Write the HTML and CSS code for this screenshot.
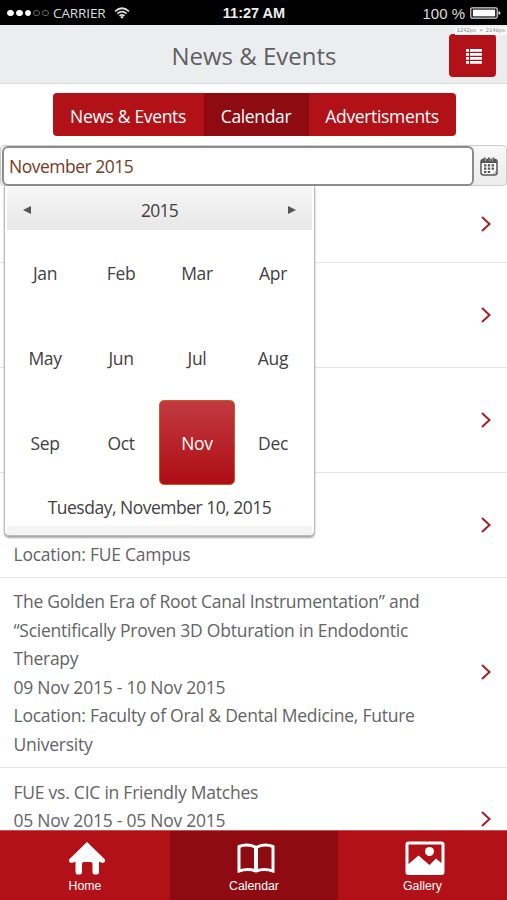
FILE: index.html
```html
<!DOCTYPE html>
<html lang="en">
<head>
    <meta charset="UTF-8">
    <meta name="viewport" content="width=device-width, initial-scale=1.0">
    <title>News &amp; Events</title>
    <link rel="stylesheet" href="styles.css">
</head>
<body>
    <div class="app">
        <!-- Status bar -->
        <div class="status-bar">
            <div class="carrier">
                <div class="dots">
                    <i class="on"></i><i class="on"></i><i class="on"></i><i></i><i></i>
                </div>
                <span class="carrier-name">CARRIER</span>
                <svg class="wifi" width="16" height="12" viewBox="0 0 16 12" fill="none" stroke="#ddd" stroke-width="1.7">
                    <path d="M1 4.3Q8 -1.8 15 4.3M3.3 6.7Q8 2.6 12.7 6.7M5.5 9Q8 6.9 10.5 9"/>
                    <circle cx="8" cy="10.3" r="1.2" fill="#ddd" stroke="none"/>
                </svg>
            </div>
            <span class="time">11:27 AM</span>
            <div class="power">
                <span class="percent">100 %</span>
                <svg width="31" height="12" viewBox="0 0 31 12">
                    <rect x="0.8" y="0.8" width="26.4" height="10.4" rx="1.5" fill="none" stroke="#ddd" stroke-width="1.2"/>
                    <rect x="2.8" y="2.6" width="22.4" height="6.8" fill="#fff"/>
                    <path d="M28.5 4Q30.5 4.3 30.5 6T28.5 8Z" fill="#ddd"/>
                </svg>
            </div>
        </div>

        <!-- Header -->
        <div class="header">
            <h1>News &amp; Events</h1>
            <button class="menu-button">
                <svg width="16" height="15" viewBox="0 0 16 15" fill="#fff">
                    <path d="M0 0h3v2.8H0zM4 0h12v2.8H4zM0 4h3v2.8H0zM4 4h12v2.8H4zM0 8h3v2.8H0zM4 8h12v2.8H4zM0 12h3v2.8H0zM4 12h12v2.8H4z"/>
                </svg>
            </button>
            <span class="size-tag">1242px × 2148px</span>
        </div>

        <!-- Tabs -->
        <div class="tabs">
            <button>News &amp; Events</button>
            <button class="active">Calendar</button>
            <button>Advertisments</button>
        </div>

        <!-- Month picker -->
        <div class="picker">
            <div class="field">
                <div class="month-input">November 2015</div>
                <div class="picker-icon">
                    <svg width="18" height="19" viewBox="0 0 18 19">
                        <rect x="1" y="2.5" width="16" height="15.5" rx="2.5" fill="#fff" stroke="#555" stroke-width="1.5"/>
                        <path d="M1 6V4.5Q1 2.3 3 2.3H15Q17 2.3 17 4.5V6Z" fill="#555"/>
                        <path d="M4.5 0.5V4M9 0.5V4M13.5 0.5V4" stroke="#555" stroke-width="1.8"/>
                        <path d="M5.4 2V4.3M9.9 2V4.3M12.6 2V4.3" stroke="#eee" stroke-width="0.6"/>
                        <path d="M4 7.3h2.4v2.2H4zM7.8 7.3h2.4v2.2H7.8zM11.6 7.3H14v2.2h-2.4zM4 10.6h2.4v2.2H4zM7.8 10.6h2.4v2.2H7.8zM11.6 10.6H14v2.2h-2.4zM4 13.9h2.4v2.2H4zM7.8 13.9h2.4v2.2H7.8z" fill="#555"/>
                        <path d="M12.5 18L17 13.5" stroke="#777" stroke-width="1"/>
                    </svg>
                </div>
            </div>
            <div class="popup">
                <div class="popup-header">
                    <span class="arrow-left"></span>
                    <span class="year">2015</span>
                    <span class="arrow-right"></span>
                </div>
                <div class="months">
                    <span>Jan</span>
                    <span>Feb</span>
                    <span>Mar</span>
                    <span>Apr</span>
                    <span>May</span>
                    <span>Jun</span>
                    <span>Jul</span>
                    <span>Aug</span>
                    <span>Sep</span>
                    <span>Oct</span>
                    <span class="selected">Nov</span>
                    <span>Dec</span>
                </div>
                <div class="today">Tuesday, November 10, 2015</div>
            </div>
        </div>

        <!-- Events -->
        <div class="events">
            <div class="event first">
                <div class="info"></div>
                <svg class="chevron" width="10" height="16" viewBox="0 0 10 16"><path d="M1 1L8.5 8L1 15"/></svg>
            </div>
            <div class="event">
                <div class="info"></div>
                <svg class="chevron" width="10" height="16" viewBox="0 0 10 16"><path d="M1 1L8.5 8L1 15"/></svg>
            </div>
            <div class="event">
                <div class="info"></div>
                <svg class="chevron" width="10" height="16" viewBox="0 0 10 16"><path d="M1 1L8.5 8L1 15"/></svg>
            </div>
            <div class="event">
                <div class="info"><p>Location: FUE Campus</p></div>
                <svg class="chevron" width="10" height="16" viewBox="0 0 10 16"><path d="M1 1L8.5 8L1 15"/></svg>
            </div>
            <div class="event tall">
                <div class="info">
                    <p>The Golden Era of Root Canal Instrumentation” and<br>“Scientifically Proven 3D Obturation in Endodontic<br>Therapy</p>
                    <p>09 Nov 2015 - 10 Nov 2015</p>
                    <p>Location: Faculty of Oral &amp; Dental Medicine, Future<br>University</p>
                </div>
                <svg class="chevron" width="10" height="16" viewBox="0 0 10 16"><path d="M1 1L8.5 8L1 15"/></svg>
            </div>
            <div class="event last">
                <div class="info">
                    <p>FUE vs. CIC in Friendly Matches</p>
                    <p>05 Nov 2015 - 05 Nov 2015</p>
                </div>
                <svg class="chevron" width="10" height="16" viewBox="0 0 10 16"><path d="M1 1L8.5 8L1 15"/></svg>
            </div>
        </div>

        <!-- Bottom navigation -->
        <div class="bottom-nav">
            <div class="nav-item">
                <svg width="38" height="34" viewBox="0 0 38 34">
                    <path d="M19 1L36.5 18Q38 20 36 21.5Q34 22.5 31 20.5V31Q31 33.5 28.5 33.5H26.5Q24.5 33.5 24.5 31.5V23Q24.5 21 22.5 21H16Q14 21 14 23V31.5Q14 33.5 12 33.5H9.5Q7.5 33.5 7.5 31V20.5Q4.5 22.5 2 21.5Q0 20 1.5 18Z" fill="#fff"/>
                </svg>
                <span>Home</span>
            </div>
            <div class="nav-item active">
                <svg width="40" height="34" viewBox="0 0 40 34" fill="none" stroke="#fff" stroke-width="3">
                    <path d="M20 6.5Q12 2 3 5.5V30Q12 27 20 30Q28 27 37 30V5.5Q28 2 20 6.5Z"/>
                    <path d="M20 6.5V30" stroke-width="4"/>
                </svg>
                <span>Calendar</span>
            </div>
            <div class="nav-item">
                <svg width="40" height="34" viewBox="0 0 40 34">
                    <rect x="2" y="2" width="36" height="30.5" rx="1.5" fill="none" stroke="#fff" stroke-width="3"/>
                    <path d="M3 23.5L13.5 14.5L24.5 24L31 17.5L37 22.5V32H3Z" fill="#fff"/>
                    <circle cx="24.5" cy="10.5" r="4.5" fill="#fff"/>
                </svg>
                <span>Gallery</span>
            </div>
        </div>
    </div>
</body>
</html>
```
FILE: styles.css
```css
* {
    box-sizing: border-box;
}
body {
    font-family: "Open Sans", "Noto Sans", sans-serif;
    font-size: 17px;
    margin: 0;
    background-color: #fff;
    color: #626466;
}
p, h1 {
    margin: 0;
}
button {
    border: none;
    padding: 0;
    font: inherit;
    color: white;
    cursor: pointer;
}
.app {
    height: 900px;
    display: flex;
    flex-direction: column;
}

/* Status bar */
.status-bar {
    flex: none;
    height: 25px;
    display: grid;
    grid-template-columns: 1fr auto 1fr;
    align-items: center;
    padding: 1px 6px 0 7px;
    background: #000;
    color: #ddd;
    font-size: 13px;
}
.carrier, .dots, .power {
    display: flex;
    align-items: center;
}
.dots {
    gap: 2px;
    margin-right: 4px;
}
.dots i {
    width: 6.8px;
    height: 6.8px;
    border: 1px solid #666;
    border-radius: 50%;
}
.dots .on {
    background: #fff;
    border-color: #fff;
}
.carrier-name {
    font-size: 13.5px;
    letter-spacing: -0.1px;
}
.wifi {
    margin-left: 8px;
}
.time {
    font-family: "Liberation Sans", Arial, sans-serif;
    font-weight: bold;
    font-size: 14.5px;
    color: #eee;
}
.power {
    justify-content: flex-end;
    gap: 5px;
    font-family: "Liberation Sans", Arial, sans-serif;
    font-size: 15px;
}

/* Header */
.header {
    flex: none;
    position: relative;
    height: 59px;
    display: flex;
    align-items: center;
    justify-content: center;
    background: #ebedef;
    border-bottom: 1px solid #d9dbdd;
}
.header h1 {
    font-size: 24px;
    font-weight: normal;
    color: #5c6062;
    padding: 2px 0 0 1px;
}
.menu-button {
    position: absolute;
    right: 11px;
    top: 9px;
    width: 47px;
    height: 43px;
    display: flex;
    align-items: center;
    justify-content: center;
    padding: 2px 0 0 2px;
    border-radius: 4px;
    background: #b21117;
}
.size-tag {
    position: absolute;
    right: 0;
    top: 2px;
    width: 52px;
    height: 8px;
    background: #f8f8f8;
    color: #888;
    font: 5.4px/8px "Liberation Mono", monospace;
    text-align: center;
    white-space: nowrap;
}

/* Tabs */
.tabs {
    flex: none;
    display: grid;
    grid-template-columns: 151px 105px 147px;
    width: 403px;
    height: 43px;
    margin: 9px auto 0 53px;
    border-radius: 4px;
    overflow: hidden;
}
.tabs button {
    background: #b21117;
    padding: 3px 1px 0 0;
    font-size: 17.5px;
    letter-spacing: -0.35px;
}
.tabs .active {
    background: #8e0b12;
}

/* Month picker */
.picker {
    flex: none;
    position: relative;
    margin-top: 9px;
    height: 42px;
}
.field {
    display: flex;
    height: 41px;
    border: 1px solid #ccc;
    border-radius: 4px;
    background: linear-gradient(#f8f8f8, #ececec);
}
.month-input {
    width: 472px;
    height: 40px;
    margin-left: 1px;
    padding: 0 0 0 5px;
    border: 2px solid #8c8c8c;
    border-radius: 6px;
    background: #fff;
    color: #753b1e;
    font-size: 17.5px;
    letter-spacing: -0.5px;
    line-height: 37px;
}
.picker-icon {
    flex: 1;
    display: flex;
    align-items: center;
    justify-content: center;
    padding: 2px 2px 0 0;
}
.popup {
    position: absolute;
    left: 4px;
    top: 41px;
    width: 311px;
    height: 350px;
    padding: 0 2px;
    background: #fff;
    border: 1px solid #bbb;
    border-top: none;
    border-radius: 0 0 5px 5px;
    box-shadow: 0 2px 2px rgba(0, 0, 0, 0.35);
    color: #414141;
    font-size: 17.5px;
    letter-spacing: -0.35px;
}
.popup-header {
    display: flex;
    align-items: center;
    justify-content: space-between;
    height: 44px;
    padding: 3px 16px 0;
    background: linear-gradient(#f7f7f7, #e8e7e8);
}
.year {
    letter-spacing: -0.8px;
}
.arrow-left, .arrow-right {
    border: 4px solid transparent;
}
.arrow-left {
    border-right: 8px solid #555;
    border-left: none;
}
.arrow-right {
    border-left: 8px solid #555;
    border-right: none;
}
.months {
    display: grid;
    grid-template-columns: repeat(4, 76px);
    grid-template-rows: repeat(3, 85px);
}
.months span {
    display: flex;
    align-items: center;
    justify-content: center;
}
.months .selected {
    color: white;
    border: 1px solid #c95a22;
    border-radius: 5px;
    background: linear-gradient(#c13a40, #ae0e14);
}
.today {
    height: 50px;
    padding-top: 9px;
    text-align: center;
    letter-spacing: -0.5px;
    line-height: 26px;
    background: linear-gradient(#fff 39px, #f4f4f4 42px);
}

/* Events */
.events {
    flex: 1;
    min-height: 0;
}
.event {
    display: flex;
    align-items: center;
    justify-content: space-between;
    height: 105px;
    padding: 0 16px 9px 13.5px;
    border-bottom: 1px solid #e4e4e4;
    font-size: 17.5px;
    letter-spacing: -0.24px;
    line-height: 28.5px;
    white-space: nowrap;
}
.event .info {
    align-self: flex-end;
}
.event .chevron {
    margin-top: 8px;
}
.chevron {
    fill: none;
    stroke: #a31f29;
    stroke-width: 2;
}
.first {
    height: 76px;
}
.tall {
    height: 190px;
}
.last {
    height: 62px;
    align-items: flex-end;
    padding: 9.5px 16px 0 13.5px;
    border-bottom: none;
}
.last .info {
    align-self: flex-start;
}
.last .chevron {
    margin-bottom: 3px;
}

/* Bottom navigation */
.bottom-nav {
    flex: none;
    position: relative;
    display: grid;
    grid-template-columns: 170px 168px 169px;
    height: 70px;
    border-top: 1px solid #c8555a;
    background: #b21117;
    color: white;
    font: 12.3px "Liberation Sans", Arial, sans-serif;
}
.nav-item {
    display: flex;
    flex-direction: column;
    align-items: center;
    gap: 4px;
    padding-top: 10px;
}
.nav-item svg {
    margin-left: 4px;
}
.nav-item.active {
    background: #8e0b12;
}
```
